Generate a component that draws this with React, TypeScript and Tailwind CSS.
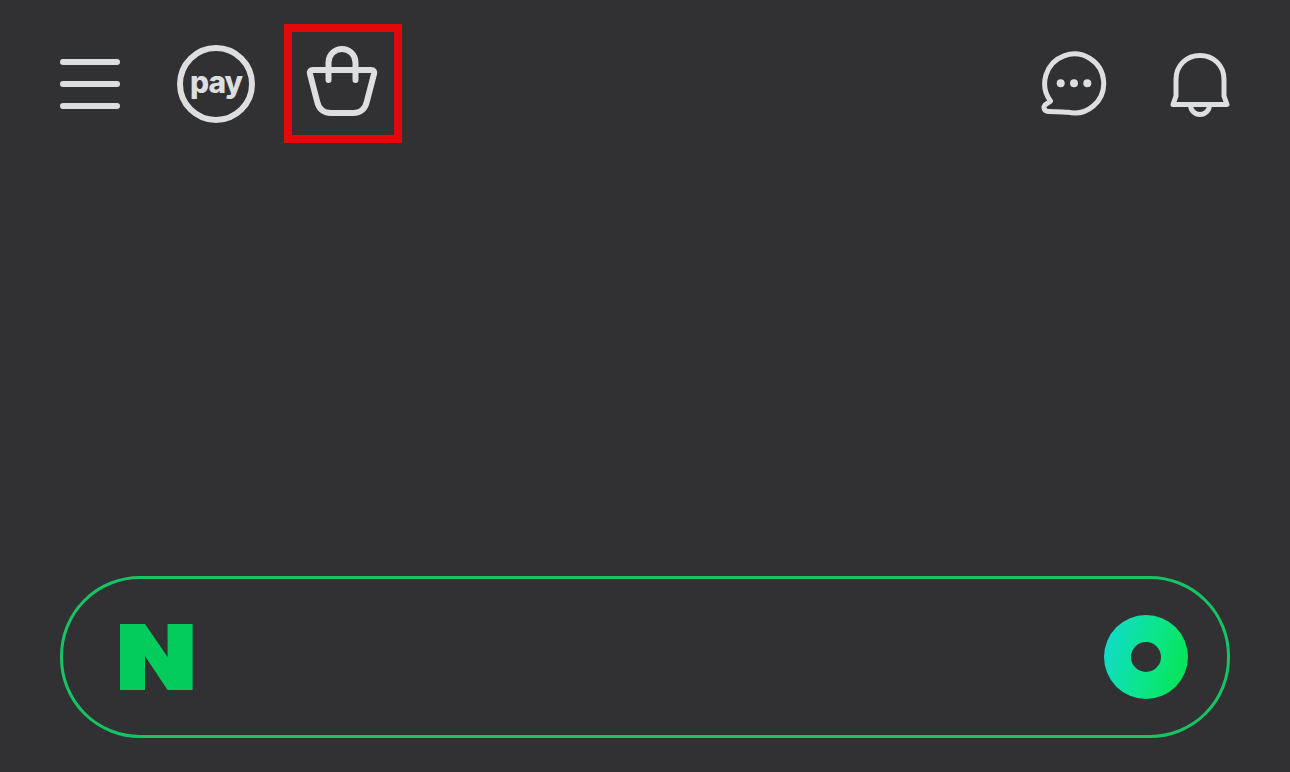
export default function App() {
  return (
    <div className="flex h-[772px] w-[1290px] flex-col justify-between overflow-hidden bg-[#313134] pt-[24px] pb-[34px] text-[#dcdee0]">
      {/* Top bar */}
      <header className="flex h-[119px] items-center justify-between pl-[60px] pr-[60px]">
        <div className="flex items-center">
          <button className="mt-[1px] flex h-[50px] w-[60px] flex-col justify-between">
            <span className="h-[6px] w-full rounded-full bg-[#dcdee0]" />
            <span className="h-[6px] w-full rounded-full bg-[#dcdee0]" />
            <span className="h-[6px] w-full rounded-full bg-[#dcdee0]" />
          </button>
          <div className="ml-[57px] flex h-[78px] w-[78px] items-center justify-center rounded-full border-[6px] border-[#dcdee0]">
            <span className="-mt-[4px] font-['Inter',sans-serif] text-[30px] leading-none font-extrabold tracking-[-1px] text-[#dcdee0]">
              pay
            </span>
          </div>
          <button className="ml-[29px] flex h-[119px] w-[118px] items-center justify-center border-[8px] border-[#e00a0a] pr-[2px] pb-[3px]">
            <svg width="72" height="72" viewBox="0 0 72 72" fill="none" stroke="#dcdee0" strokeWidth="6" strokeLinecap="round" strokeLinejoin="round" className="block">
              <path d="M7 24H65Q69 24 68 28L61 55Q58.5 67 47 67H25Q13.5 67 11 55L4 28Q3 24 7 24Z" />
              <path d="M22.5 34V16.5a13.5 13.5 0 0 1 27 0V34" />
            </svg>
          </button>
        </div>
        <div className="flex items-center">
          <button className="mt-[1px]">
            <svg width="68" height="68" viewBox="0 0 68 68" fill="none" stroke="#dcdee0" strokeWidth="5" strokeLinejoin="round" className="block">
              <path d="M10.5 51A29.5 29.5 0 1 1 28 62.3C22 62 16 61.5 9 61.5C4 61.5 3 57.5 5 55C7 53 9.5 52.5 10.5 51Z" />
              <circle cx="20.7" cy="33.3" r="4" fill="#dcdee0" stroke="none" />
              <circle cx="34" cy="33.3" r="4" fill="#dcdee0" stroke="none" />
              <circle cx="47.3" cy="33.3" r="4" fill="#dcdee0" stroke="none" />
            </svg>
          </button>
          <button className="ml-[62px] mt-[3px]">
            <svg width="60" height="66" viewBox="0 0 60 66" fill="none" stroke="#dcdee0" strokeWidth="5" strokeLinejoin="round" className="block">
              <path d="M30 3.5C43 3.5 54 13 54 27.5V44L57 52.5H3L6 44V27.5C6 13 17 3.5 30 3.5Z" />
              <path d="M20.5 53a9.5 9.5 0 0 0 19 0" />
            </svg>
          </button>
        </div>
      </header>

      {/* Search bar */}
      <div className="mx-[60px] flex h-[162px] items-center justify-between rounded-[80px] border-[3px] border-[#17c463] pl-[57px] pr-[39px]">
        <svg width="73" height="66" viewBox="0 0 73 66" className="block">
          <path d="M0 0H25L47.6 33V0H72.6V66H47.6L25 32V66H0Z" fill="#03cc5c" />
        </svg>
        <div className="flex h-[84px] w-[84px] items-center justify-center rounded-full bg-[linear-gradient(105deg,#12d9d2_0%,#0be58f_50%,#07e55e_85%)]">
          <div className="h-[30px] w-[30px] rounded-full bg-[#313134]" />
        </div>
      </div>
    </div>
  );
}
